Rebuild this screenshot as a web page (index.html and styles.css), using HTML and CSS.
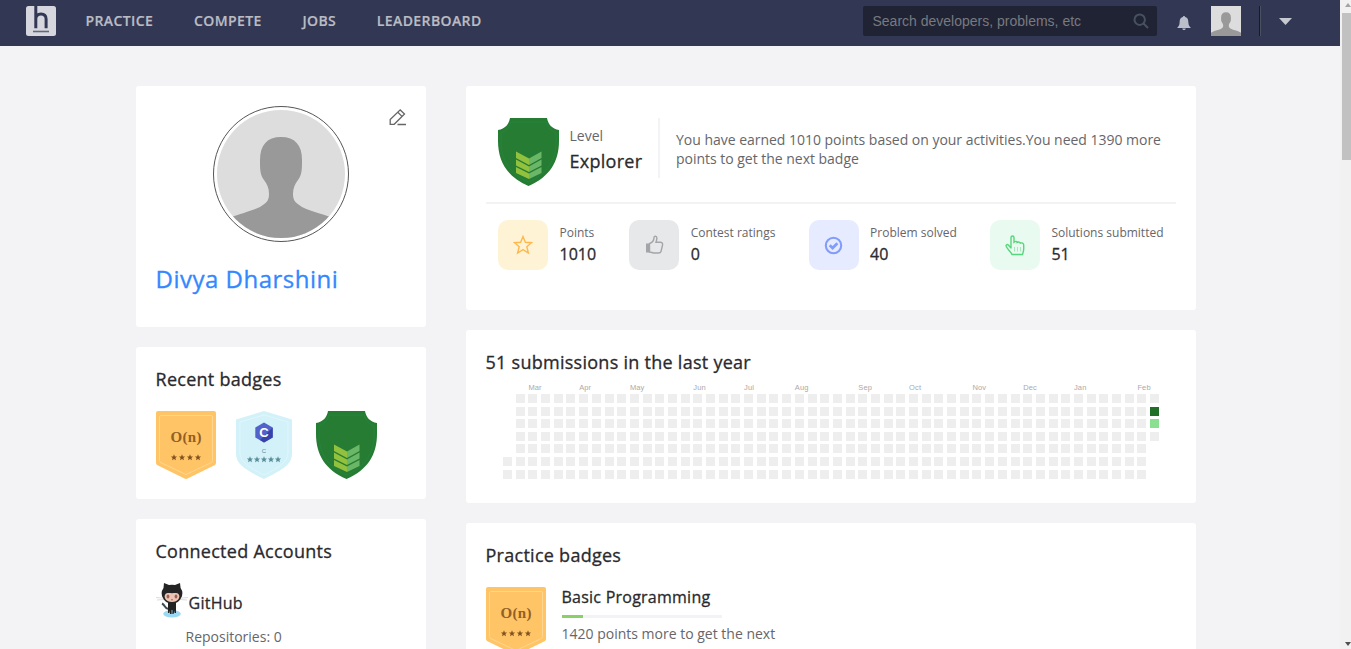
FILE: index.html
```html
<!DOCTYPE html>
<html lang="en">
<head>
<meta charset="utf-8">
<title>Divya Dharshini</title>
<link rel="stylesheet" href="styles.css">
</head>
<body>
<svg class="defs" width="0" height="0">
  <defs>
    <path id="star" d="M0-3.2 .9-1 3.1-1 1.4.5 2 2.8 0 1.500-2 2.8-1.4.5-3.1-1-.9-1Z"/>
    <symbol id="person" viewBox="0 0 128 128">
      <rect width="128" height="128" fill="#ddd"/>
      <path d="M64 27c-14 0-21 8-21 23 0 9 0 15 4 20 3 4 5 8 5 14 0 7-3 9-9 13C35 101 25 103 12 108L0 114v14h128v-14l-12-6C103 103 93 101 85 97c-6-4-9-6-9-13 0-6 2-10 5-14 4-5 4-11 4-20C85 35 78 27 64 27Z" fill="#999"/>
    </symbol>
    <symbol id="shield" viewBox="0 0 61 68">
      <path d="M12 0H49C50 6 54 11 61 12V23C61 43 52 59 30.500 68 9 59 0 43 0 23V12C7 11 11 6 12 0Z" fill="#277c33"/>
      <path d="M13 4H48C50 10 53 13 58 15V24C58 42 49 56 30.500 64 12 56 3 42 3 24V15C8 13 11 10 13 4Z" fill="none" stroke="#24853d" stroke-width="1"/>
      <path d="M18 33.500 31 40.500V47L18 40ZM18 41.500 31 48.500V54L18 47.500ZM18 49 31 55.500V61L18 55Z" fill="#92c13e"/>
      <path d="M43.500 33.500 31 40.500V47L43.500 40ZM43.500 41.500 31 48.500V54L43.500 47.500ZM43.500 49 31 55.500V61L43.500 55Z" fill="#6ab768"/>
    </symbol>
    <symbol id="on-badge" viewBox="0 0 60 68">
      <path d="M2 0H58Q60 0 60 2V52Q60 53.500 58.500 54.200L31.500 67.500Q30 68.300 28.500 67.500L1.500 54.200Q0 53.500 0 52V2Q0 0 2 0Z" fill="#ffc466"/>
      <path d="M5 4.500H55Q56.500 4.500 56.500 6V49.500Q56.500 51 55 51.700L30 63.500 5 51.700Q3.500 51 3.500 49.500V6Q3.500 4.500 5 4.500Z" fill="none" stroke="#ffd68f" stroke-width="1"/>
      <text x="30" y="30.500" class="on-text" text-anchor="middle" textLength="31">O(n)</text>
      <g fill="#825320"><use href="#star" x="18" y="46.500"/><use href="#star" x="26" y="46.500"/><use href="#star" x="34" y="46.500"/><use href="#star" x="42" y="46.500"/></g>
    </symbol>
  </defs>
</svg>

<div class="viewport">
<div class="page">
  <header class="topbar">
    <svg class="logo" viewBox="0 0 30 30">
      <rect width="30" height="30" rx="2.500" fill="#d6d7de"/>
      <path d="M9.800 0V22.300M9.800 13C9.800 9.500 11.800 7.900 15 7.900S20.100 9.600 20.100 13V22.300" fill="none" stroke="#323754" stroke-width="3"/>
      <path d="M7 25.500H23" stroke="#62667e" stroke-width="1.600"/>
    </svg>
    <nav class="nav"><a>PRACTICE</a><a>COMPETE</a><a>JOBS</a><a>LEADERBOARD</a></nav>
    <div class="tools">
      <div class="search"><span>Search developers, problems, etc</span>
        <svg width="16" height="16" viewBox="0 0 16 16" fill="none" stroke="#48515e" stroke-width="2"><circle cx="6.700" cy="6.700" r="5.200"/><path d="M10.500 10.500 15 15"/></svg>
      </div>
      <svg class="bell" viewBox="0 0 14 14"><path d="M7 0C7.700 0 8 .4 8 1 10.800 1.500 11.300 4 11.400 6.500 11.500 9 12.200 10.300 13.600 11.500V12H.4V11.500C1.800 10.300 2.500 9 2.600 6.500 2.700 4 3.200 1.500 6 1 6 .4 6.300 0 7 0ZM5.300 12.500H8.700C8.500 13.500 8 14 7 14S5.500 13.500 5.300 12.500Z" fill="#bbbfca"/></svg>
      <svg class="mini-avatar"><use href="#person"/></svg>
      <i class="rule"></i>
      <svg class="caret" viewBox="0 0 13 7"><path d="M0 0H13L6.500 7Z" fill="#c7c9d1"/></svg>
    </div>
  </header>

  <main class="columns">
    <aside class="column left">
      <section class="card profile">
        <svg class="edit" viewBox="0 0 18 17" fill="none" stroke="#666" stroke-width="1.300"><path d="M1.200 10.500 11.200 .9 15.500 4.900 5.200 15.300H1.200ZM8.800 3.300 13 7.400M8.500 15.500H17"/></svg>
        <div class="avatar"><svg width="128" height="128"><use href="#person"/></svg></div>
        <h1>Divya Dharshini</h1>
      </section>
      <section class="card recent">
        <h2>Recent badges</h2>
        <div class="badges">
          <svg width="60" height="68"><use href="#on-badge"/></svg>
          <svg width="56" height="68" viewBox="0 0 56 68">
            <path d="M28 0 56 8.500V43C56 54 44 60 28 68 12 60 0 54 0 43V8.500Z" fill="#d3f1f9"/>
            <path d="M28 4 52 11V42C52 51 42 57 28 64 14 57 4 51 4 42V11Z" fill="none" stroke="#e0f6fb"/>
            <path d="M28 11.500 36.700 16.500V26.500L28 31.500 19.300 26.500V16.500Z" fill="#5163cb"/><path d="M36.700 16.500V26.500L28 31.500 24 29Z" fill="#3544ac"/>
            <text x="28" y="26" text-anchor="middle" class="c-mark">C</text>
            <text x="28" y="41.500" text-anchor="middle" class="c-name">C</text>
            <g fill="#598d9a"><use href="#star" x="14" y="48.500"/><use href="#star" x="21" y="48.500"/><use href="#star" x="28" y="48.500"/><use href="#star" x="35" y="48.500"/><use href="#star" x="42" y="48.500"/></g>
          </svg>
          <svg class="explorer-badge" width="61" height="68"><use href="#shield"/></svg>
        </div>
      </section>
      <section class="card accounts">
        <h2>Connected Accounts</h2>
        <div class="account">
          <svg width="32" height="36" viewBox="0 0 32 36">
            <ellipse cx="16" cy="31.800" rx="8.800" ry="3.700" fill="#9bd8f3"/>
            <path d="M0 15.500 8 16.200M1 18 8 17.500M24 16.200 32 15.500M24 17.500 31 18" stroke="#ddd"/>
            <path d="M13 26.500C9 28 9.500 23 6 21.500" fill="none" stroke="#3d4a50" stroke-width="2"/>
            <path d="M12 20H20V31H18.500V28.500L17.500 32H16.400V28H15.600V32H14.200L13.300 28.500V31H12Z" fill="#222"/>
            <path d="M8 1 13 3Q16 2.300 19 3L24 1 24.600 6Q28 11 25 16C23 20 20 21.500 16 21.500S9 20 7 16Q4 11 7.500 6Z" fill="#242424"/>
            <path d="M9.500 12C11 10.500 14 11.300 16 11.300S21 10.500 22.500 12C25 15 22 20 16 20S7 15 9.500 12Z" fill="#eec5b5"/>
            <ellipse cx="12" cy="14.600" rx="1.400" ry="2" fill="#9b6255"/><ellipse cx="20" cy="14.600" rx="1.400" ry="2" fill="#9b6255"/>
            <path d="M15 17.800H17" stroke="#a66a58"/>
          </svg><span>GitHub</span>
        </div>
        <p class="repos">Repositories: 0</p>
      </section>
    </aside>

    <div class="column right">
      <section class="card summary">
        <div class="level">
          <svg width="61" height="68"><use href="#shield"/></svg>
          <div class="level-name"><span>Level</span><strong>Explorer</strong></div>
          <p>You have earned 1010 points based on your activities.You need 1390 more<br>points to get the next badge</p>
        </div>
        <div class="stats">
          <div class="stat"><div class="tile yellow"><svg width="20" height="20" viewBox="0 0 20 20"><path d="M10 1.500 12.400 7.300 18.500 7.700 13.800 11.700 15.400 18 10 14.600 4.600 18 6.200 11.700 1.500 7.700 7.600 7.300Z" fill="none" stroke="#ffb84d" stroke-width="1.400"/></svg></div><div><span>Points</span><b>1010</b></div></div>
          <div class="stat"><div class="tile gray"><svg width="20" height="20" viewBox="0 0 20 20"><path d="M2 8.500H5.500V17.500H2Z" fill="#a3a5a8"/><path d="M5.500 8.500C8.500 7.500 10 5.500 10 2.500 10 .7 12.700.8 12.900 3 13 4.500 12.400 6 12 7.200H16.500C18.800 7.200 18.900 9.500 18.300 11L17 16.500C16.700 17.700 16 18 14.500 18H11C8.500 18 7.500 17 5.500 17Z" fill="none" stroke="#a3a5a8" stroke-width="1.400"/></svg></div><div><span>Contest ratings</span><b>0</b></div></div>
          <div class="stat"><div class="tile blue"><svg width="20" height="20" viewBox="0 0 20 20" fill="none" stroke="#819cfb"><circle cx="9.500" cy="10.500" r="7.700" stroke-width="2.100"/><path d="M5.700 10.300 8.600 13 13.400 8.300" stroke-width="2.800"/></svg></div><div><span>Problem solved</span><b>40</b></div></div>
          <div class="stat"><div class="tile green"><svg width="20" height="22" viewBox="0 0 20 22" fill="none" stroke="#55d77b"><path d="M6 14.500V3.500C6 1.400 9 1.400 9 3.500V8.200C10.500 6.800 12 7.500 12.200 8.500 13.500 7.600 15 8 15.300 9.200 16.700 8.400 18.700 9 18.700 11V15C18.700 17 18 18.500 17.500 20.500H7C6.500 18.500 3.500 16.500 1.500 13 .2 10.700 2.200 9.800 3.500 11.200L6 14" stroke-width="1.400"/><path d="M9.500 13V17.500M12.500 13V17.500M15.500 13V17.500" stroke="#a6e9ba"/></svg></div><div><span>Solutions submitted</span><b>51</b></div></div>
        </div>
      </section>
      <section class="card activity">
        <h2>51 submissions in the last year</h2>
        <div class="months"></div>
        <div class="calendar"></div>
      </section>
      <section class="card practice">
        <h2>Practice badges</h2>
        <div class="practice-row">
          <svg width="60" height="68"><use href="#on-badge"/></svg>
          <div><h3>Basic Programming</h3><div class="progress"><i></i></div><p>1420 points more to get the next</p></div>
        </div>
      </section>
    </div>
  </main>
</div>
<div class="scrollbar"><i class="up"></i><i class="thumb"></i><i class="down"></i></div>
</div>
<script src="calendar.js"></script>
</body>
</html>
```
FILE: styles.css
```css
* { box-sizing: border-box; }
body { margin: 0; font-family: "Open Sans", "Noto Sans", sans-serif; color: #2a2a2e; background: #f3f3f6; }
h1, h2, h3, p { margin: 0; }
svg { display: block; flex: none; }
.defs { position: absolute; }
.viewport { display: flex; width: 1351px; height: 649px; overflow: hidden; }
.page { width: 1340px; flex: none; }

/* Medium weight, between the regular and semibold cuts */
h1, h2, h3, .account span, .level-name strong, .stat b { -webkit-text-stroke: .3px currentColor; }

.topbar { height: 46px; background: #323754; display: flex; align-items: flex-start; padding: 6px 48px 0 26px; }
.logo { width: 30px; height: 30px; }
.nav { display: flex; padding-left: 29.5px; font-size: 14px; line-height: 30px; font-weight: 600; color: #bbbcc3; -webkit-text-stroke: .2px currentColor; }
.nav a { margin-right: 40.7px; letter-spacing: .4px; }
.tools { display: flex; margin-left: auto; }
.search { width: 294px; height: 30px; background: #202334; border-radius: 2px; padding: 0 8px 0 9.500px; display: flex; align-items: center; justify-content: space-between; font: 14px/30px "Liberation Sans", Arial, sans-serif; color: #777a80; }
.bell { width: 14px; height: 14px; margin: 10px 20.500px 0 19.500px; }
.mini-avatar { width: 30px; height: 30px; }
.rule { width: 2px; height: 30px; margin-left: 18px; background: #181a24; border-right: 1px solid #4a505f; }
.caret { width: 13px; height: 7px; margin: 12px 0 0 18px; }

.columns { display: flex; gap: 40px; padding: 40px 0 0 136px; }
.column { display: flex; flex-direction: column; gap: 20px; }
.left { width: 290px; }
.right { width: 730px; }
.card { background: #fff; border-radius: 3px; padding: 20px; }
.card h2 { font-size: 18px; line-height: 24px; font-weight: 500; letter-spacing: .27px; white-space: nowrap; margin-left: -.5px; }

.profile { position: relative; height: 241px; }
.edit { position: absolute; top: 23px; right: 19px; width: 18px; height: 17px; }
.avatar { width: 136px; height: 136px; margin: 0 auto; border: 1px solid #555; border-radius: 50%; padding: 3px; }
.avatar svg { border-radius: 50%; }
.profile h1 { margin-top: 21px; margin-left: -.5px; font-size: 24px; line-height: 32px; font-weight: 500; letter-spacing: .5px; color: #3388ff; }

.recent { height: 152px; }
.badges { display: flex; gap: 20px; margin-top: 20px; }
.explorer-badge { margin-left: 4px; }
.on-text { font: bold 15px "Liberation Serif", serif; fill: #925f25; }
.c-mark { font: bold 13px "Liberation Sans", sans-serif; fill: #fff; }
.c-name { font: 6px "Liberation Sans", sans-serif; fill: #598d9a; }

.accounts { height: 240px; }
.account { display: flex; align-items: flex-start; margin-top: 19px; height: 40px; font-size: 16px; font-weight: 500; line-height: 42px; letter-spacing: .25px; }
.account span { margin-left: .5px; }
.repos { font-size: 14px; line-height: 20px; color: #66666a; margin: 5px 0 0 29.500px; }

.summary { height: 224px; }
.level { display: flex; height: 98px; padding: 12px; border-bottom: 2px solid #f3f3f6; }
.level-name { display: flex; flex-direction: column; flex: none; width: 101px; height: 60px; padding: 8px 0 0 10.500px; border-right: 2px solid #f3f3f6; }
.level-name span { font-size: 14px; line-height: 20px; color: #66666a; }
.level-name strong { font-size: 18px; line-height: 30px; font-weight: 500; letter-spacing: .27px; }
.level p { font-size: 14px; line-height: 19px; letter-spacing: -.02px; color: #66666a; margin: 12px 0 0 16px; white-space: nowrap; }
.stats { display: flex; justify-content: space-between; padding: 16px 12.500px 0 12px; }
.stat { display: flex; gap: 11.500px; white-space: nowrap; }
.stat span { display: block; font-size: 12px; line-height: 16px; margin-top: 5px; color: #66666a; }
.stat b { display: block; font-size: 16px; line-height: 24px; margin-top: 1px; font-weight: 500; }
.tile { width: 50px; height: 50px; border-radius: 10px; display: flex; align-items: center; justify-content: center; }
.yellow { background: #fff3d6; }
.gray { background: #e7e8ea; }
.blue { background: #e6ebff; }
.green { background: #e9fbf0; }

.activity { height: 173px; }
.months, .calendar { display: grid; grid-template-columns: repeat(52, 9px); column-gap: 3.69px; padding-left: 17px; }
.months { font: 7.5px/10px "Liberation Sans", sans-serif; letter-spacing: .15px; color: #aaa; padding-top: 1px; margin-top: 8px; height: 12px; }
.calendar { grid-template-rows: repeat(7, 9px); row-gap: 3.6px; grid-auto-flow: column; }
.calendar i { background: #eee; }
.calendar .high { background: #216e28; }
.calendar .low { background: #8ae090; }

.practice { height: 260px; }
.practice-row { display: flex; gap: 15.500px; margin-top: 20px; }
.practice-row h3 { font-size: 16px; line-height: 20px; font-weight: 500; letter-spacing: .24px; }
.progress { width: 160px; height: 3px; margin: 8px 0; background: #f3f3f6; }
.progress i { display: block; width: 21px; height: 3px; background: #88d169; }
.practice-row p { font-size: 14px; line-height: 16px; color: #66666a; }

.scrollbar { width: 11px; flex: none; height: 649px; background: #f1f1f1; display: flex; flex-direction: column; align-items: flex-end; overflow: hidden; }
.up, .down { border: 3.500px solid transparent; }
.up { border-top: 0; border-bottom: 4px solid #a3a3a3; margin-top: 3px; }
.thumb { width: 9px; height: 147px; margin-top: 6px; background: #c1c1c1; }
.down { border-bottom: 0; border-top: 4px solid #505050; margin-top: auto; margin-bottom: 3px; }
```
FILE: calendar.js
```js
const months = { Mar: 2, Apr: 6, May: 10, Jun: 15, Jul: 19, Aug: 23, Sep: 28, Oct: 32, Nov: 37, Dec: 41, Jan: 45, Feb: 50 };
const labels = document.querySelector('.months');
for (const [name, week] of Object.entries(months)) {
  const label = document.createElement('span');
  label.textContent = name;
  label.style.gridColumn = week + 1;
  label.style.gridRow = 1;
  labels.append(label);
}

// The year starts on day 5 of the first week and ends on day 3 of the last one.
const calendar = document.querySelector('.calendar');
for (let day = 5; day <= 51 * 7 + 3; day++) {
  const cell = document.createElement('i');
  cell.style.gridColumn = Math.floor(day / 7) + 1;
  cell.style.gridRow = day % 7 + 1;
  if (day === 358) cell.className = 'high';
  if (day === 359) cell.className = 'low';
  calendar.append(cell);
}
```
